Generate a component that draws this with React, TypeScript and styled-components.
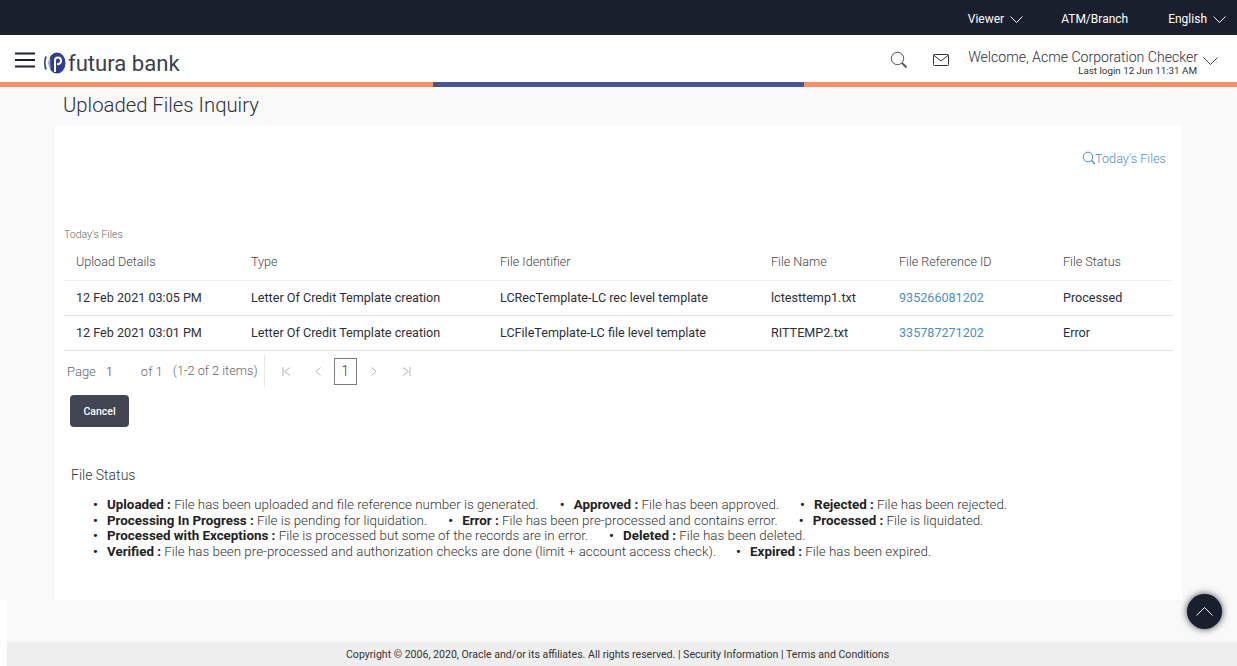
import React from "react";
import styled, { createGlobalStyle } from "styled-components";

const GlobalStyle = createGlobalStyle`
  html, body {
    margin: 0;
    padding: 0;
    background: #fff;
    font-family: Roboto, "Liberation Sans", sans-serif;
    color: #2c2f3a;
  }
  * { box-sizing: border-box; }
`;

const Page = styled.div`
  width: 1237px;
  height: 666px;
  display: flex;
  flex-direction: column;
  position: relative;
  overflow: hidden;
`;

const TopBar = styled.div`
  height: 35px;
  background: #1a1f2d;
  color: #fff;
  display: flex;
  justify-content: flex-end;
  align-items: center;
  padding: 3px 11px 0 0;
  font-size: 12px;
`;

const TopItem = styled.div<{ $gap: number }>`
  display: flex;
  align-items: center;
  gap: 6px;
  margin-left: ${(p) => p.$gap}px;
`;

const Header = styled.header`
  height: 47px;
  background: #fff;
  display: flex;
  align-items: center;
  padding: 0 19px 0 15px;
`;

const MenuIcon = styled.svg`
  margin-top: 2px;
`;

const Brand = styled.div`
  display: flex;
  align-items: center;
  margin-left: 9px;
  margin-top: 9px;
`;

const BrandName = styled.span`
  font-size: 22.1px;
  color: #3a3f4c;
  margin-left: 2px;
`;

const HeaderRight = styled.div`
  margin-left: auto;
  margin-top: 2px;
  display: flex;
  align-items: center;
`;

const MailIcon = styled.svg`
  margin-left: 25px;
`;

const Welcome = styled.div`
  display: flex;
  flex-direction: column;
  align-items: flex-end;
  margin: 7px 5px 0 19px;
`;

const WelcomeName = styled.div`
  font-size: 14.1px;
  font-weight: 300;
  line-height: 15px;
  color: #2c2f3a;
`;

const LastLogin = styled.div`
  font-size: 9.8px;
  line-height: 12px;
  margin-right: 1px;
  color: #333;
`;

const UserCaret = styled.span`
  display: flex;
  margin-top: 2px;
`;

const Stripe = styled.div`
  height: 5px;
  display: grid;
  grid-template-columns: 433px 371px 1fr;
  background: #f78f68;
`;

const StripeMid = styled.div`
  grid-column: 2;
  background: #4a5590;
`;

const Main = styled.main`
  height: 513px;
  padding: 0 55px;
  background: #f9f9f9;
  display: flex;
  flex-direction: column;
`;

const Title = styled.h1`
  margin: 7px 0 0 8px;
  height: 31px;
  font-size: 20.3px;
  line-height: 23px;
  font-weight: 300;
  color: #2c2f3a;
`;

const Card = styled.section`
  background: #fff;
  height: 475px;
  padding: 0 9px;
  display: flex;
  flex-direction: column;
`;

const LinkRow = styled.div`
  display: flex;
  justify-content: flex-end;
  align-items: flex-start;
  padding-top: 26px;
  height: 103px;
  margin-right: 7px;
  color: #4a8fc7;
  font-size: 12.7px;
  font-weight: 300;
`;

const LinkIcon = styled.svg`
  margin-right: -1px;
`;

const Caption = styled.div`
  font-size: 10.5px;
  font-weight: 300;
  color: #666;
  line-height: 13px;
  height: 13px;
`;

const Table = styled.div`
  display: flex;
  flex-direction: column;
  width: 1109px;
`;

const Row = styled.div<{ $head?: boolean }>`
  display: grid;
  grid-template-columns: 175px 249px 271px 128px 164px 1fr;
  padding: ${(p) => (p.$head ? "2px 0 0 12px" : "0 0 2px 12px")};
  height: ${(p) => (p.$head ? 40 : 35)}px;
  align-items: center;
  font-size: ${(p) => (p.$head ? 12.6 : 12.6)}px;
  font-weight: ${(p) => (p.$head ? 300 : 400)};
  color: ${(p) => (p.$head ? "#444" : "#2c2f3a")};
  border-bottom: 1px solid ${(p) => (p.$head ? "#efefef" : "#e2e2e2")};
`;

const RefLink = styled.span`
  color: #4a8fc7;
`;

const Pager = styled.div`
  display: flex;
  align-items: center;
  height: 40px;
  padding-left: 3px;
  font-size: 13px;
  font-weight: 300;
  color: #666;
`;

const PageNumber = styled.span<{ $width: number }>`
  width: ${(p) => p.$width}px;
  color: #444;
  padding-left: 10px;
`;

const PagerInfo = styled.span`
  margin-left: 10px;
  padding-right: 6px;
  height: 32px;
  line-height: 32px;
  font-size: 12.7px;
  border-right: 1px solid #e6e6e6;
`;

const PagerArrow = styled.span<{ $left: number }>`
  display: flex;
  margin-left: ${(p) => p.$left}px;
  color: #b5b5b5;
`;

const PageBox = styled.span`
  width: 23px;
  height: 27px;
  margin-left: 13px;
  border: 1px solid #7a7a7a;
  display: flex;
  align-items: center;
  justify-content: center;
  font-size: 14px;
  color: #444;
`;

const CancelButton = styled.button`
  width: 59px;
  height: 32px;
  margin: 4px 0 0 6px;
  background: #424652;
  color: #fff;
  border: none;
  border-radius: 4px;
  font-family: inherit;
  font-size: 10.5px;
  font-weight: 500;
`;

const StatusTitle = styled.div`
  margin: 40px 0 0 7px;
  font-size: 14px;
  font-weight: 300;
  line-height: 16px;
  color: #333;
`;

const StatusBox = styled.div`
  margin: 14px 0 0 29px;
  font-size: 13.37px;
  font-weight: 300;
  line-height: 15.67px;
  color: #333;
`;

const StatusLine = styled.div`
  display: flex;
  white-space: nowrap;
`;

const StatusItem = styled.span<{ $left: number }>`
  margin-left: ${(p) => p.$left}px;
  &::before {
    content: "•";
    display: inline-block;
    width: 14px;
    font-weight: 700;
    color: #222;
  }
  b {
    font-weight: 700;
    color: #222;
  }
`;

const BottomArea = styled.div`
  flex: 1;
  margin-left: 7px;
  background: #f9f9f9;
  display: flex;
  flex-direction: column;
  justify-content: flex-end;
`;

const Footer = styled.footer`
  height: 24px;
  background: #eeeeee;
  display: flex;
  align-items: center;
  padding-left: 339px;
  font-size: 10.57px;
  color: #333;
`;

const ScrollTop = styled.button`
  position: absolute;
  left: 1187px;
  top: 594px;
  width: 35px;
  height: 35px;
  border-radius: 50%;
  border: none;
  padding: 0;
  background: #1a1f2d;
  box-shadow: 0 0 7px rgba(26, 31, 45, 0.85);
  display: flex;
  align-items: center;
  justify-content: center;
`;

const Chevron = ({ w = 13, h = 7, color = "#fff" }: { w?: number; h?: number; color?: string }) => (
  <svg width={w} height={h} viewBox={`0 0 ${w} ${h}`} fill="none">
    <path d={`M0.5 0.5L${w / 2} ${h - 0.5}L${w - 0.5} 0.5`} stroke={color} strokeWidth="1" />
  </svg>
);

const files = [
  ["12 Feb 2021 03:05 PM", "Letter Of Credit Template creation", "LCRecTemplate-LC rec level template", "lctesttemp1.txt", "935266081202", "Processed"],
  ["12 Feb 2021 03:01 PM", "Letter Of Credit Template creation", "LCFileTemplate-LC file level template", "RITTEMP2.txt", "335787271202", "Error"],
];

const statuses = [
  [
    [0, "Uploaded :", "File has been uploaded and file reference number is generated."],
    [21, "Approved :", "File has been approved."],
    [21, "Rejected :", "File has been rejected."],
  ],
  [
    [0, "Processing In Progress :", "File is pending for liquidation."],
    [21, "Error :", "File has been pre-processed and contains error."],
    [21, "Processed :", "File is liquidated."],
  ],
  [
    [0, "Processed with Exceptions :", "File is processed but some of the records are in error."],
    [21, "Deleted :", "File has been deleted."],
  ],
  [
    [0, "Verified :", "File has been pre-processed and authorization checks are done (limit + account access check)."],
    [20, "Expired :", "File has been expired."],
  ],
] as [number, string, string][][];

export default function App() {
  return (
    <Page>
      <GlobalStyle />
      <TopBar>
        <TopItem $gap={0}>Viewer <Chevron /></TopItem>
        <TopItem $gap={38}>ATM/Branch</TopItem>
        <TopItem $gap={40}>English <Chevron /></TopItem>
      </TopBar>
      <Header>
        <MenuIcon width="20" height="16" viewBox="0 0 20 16">
          <path d="M0 1.5H20M0 8H20M0 14.5H20" stroke="#1f2330" strokeWidth="2" />
        </MenuIcon>
        <Brand>
          <svg width="22" height="22" viewBox="0 0 22 22" fill="none">
            <path d="M2 4.5C0.6 8 0.6 14 2 17.5" stroke="#2f3c8f" strokeWidth="1.8" />
            <ellipse cx="13" cy="11" rx="8.5" ry="10.5" fill="#2f3c8f" />
            <path d="M5.6 6L6 17" stroke="#fff" strokeWidth="0.8" />
            <path d="M11 20V8.5C11 6.5 12.5 5.5 14 5.5C16 5.5 17 7 17 8.8C17 11 15.5 12.2 13 12.2" stroke="#fff" strokeWidth="2" />
          </svg>
          <BrandName>futura bank</BrandName>
        </Brand>
        <HeaderRight>
          <svg width="18" height="18" viewBox="0 0 18 18" fill="none">
            <circle cx="7.5" cy="7.5" r="6.2" stroke="#555" strokeWidth="1" />
            <path d="M12 12L16.5 16.5" stroke="#555" strokeWidth="1.8" />
          </svg>
          <MailIcon width="16" height="12" viewBox="0 0 16 12" fill="none">
            <rect x="0.5" y="0.5" width="15" height="11" rx="1" stroke="#333" />
            <path d="M0.5 1L8 7L15.5 1" stroke="#333" />
          </MailIcon>
          <Welcome>
            <WelcomeName>Welcome, Acme Corporation Checker</WelcomeName>
            <LastLogin>Last login 12 Jun 11:31 AM</LastLogin>
          </Welcome>
          <UserCaret>
            <Chevron w={15} h={8} color="#444" />
          </UserCaret>
        </HeaderRight>
      </Header>
      <Stripe><StripeMid /></Stripe>
      <Main>
        <Title>Uploaded Files Inquiry</Title>
        <Card>
          <LinkRow>
            <LinkIcon width="14" height="14" viewBox="0 0 14 14" fill="none">
              <circle cx="6" cy="6" r="4.8" stroke="#4a8fc7" />
              <path d="M9.5 9.5L13 13" stroke="#4a8fc7" strokeWidth="1.5" />
            </LinkIcon>
            <span>Today's Files</span>
          </LinkRow>
          <Caption>Today's Files</Caption>
          <Table>
            <Row $head>
              <span>Upload Details</span>
              <span>Type</span>
              <span>File Identifier</span>
              <span>File Name</span>
              <span>File Reference ID</span>
              <span>File Status</span>
            </Row>
            {files.map((f) => (
              <Row key={f[4]}>
                <span>{f[0]}</span>
                <span>{f[1]}</span>
                <span>{f[2]}</span>
                <span>{f[3]}</span>
                <RefLink>{f[4]}</RefLink>
                <span>{f[5]}</span>
              </Row>
            ))}
          </Table>
          <Pager>
            Page
            <PageNumber $width={45}>1</PageNumber>
            of 1
            <PagerInfo>(1-2 of 2 items)</PagerInfo>
            <PagerArrow $left={17}>
              <svg width="9" height="9" viewBox="0 0 9 9" fill="none"><path d="M1 0V9M8 0.5L2.5 4.5L8 8.5" stroke="currentColor" /></svg>
            </PagerArrow>
            <PagerArrow $left={24}>
              <svg width="6" height="9" viewBox="0 0 6 9" fill="none"><path d="M5.5 0.5L1 4.5L5.5 8.5" stroke="currentColor" /></svg>
            </PagerArrow>
            <PageBox>1</PageBox>
            <PagerArrow $left={14}>
              <svg width="6" height="9" viewBox="0 0 6 9" fill="none"><path d="M0.5 0.5L5 4.5L0.5 8.5" stroke="currentColor" /></svg>
            </PagerArrow>
            <PagerArrow $left={25}>
              <svg width="9" height="9" viewBox="0 0 9 9" fill="none"><path d="M8 0V9M1 0.5L6.5 4.5L1 8.5" stroke="currentColor" /></svg>
            </PagerArrow>
          </Pager>
          <CancelButton>Cancel</CancelButton>
          <StatusTitle>File Status</StatusTitle>
          <StatusBox>
            {statuses.map((line, i) => (
              <StatusLine key={i}>
                {line.map(([left, name, text]) => (
                  <StatusItem key={name} $left={left}>
                    <b>{name}</b> {text}
                  </StatusItem>
                ))}
              </StatusLine>
            ))}
          </StatusBox>
        </Card>
      </Main>
      <BottomArea>
        <Footer>Copyright © 2006, 2020, Oracle and/or its affiliates. All rights reserved. | Security Information | Terms and Conditions</Footer>
      </BottomArea>
      <ScrollTop>
        <svg width="17" height="9" viewBox="0 0 17 9" fill="none">
          <path d="M0.5 8.5L8.5 0.5L16.5 8.5" stroke="#fff" strokeWidth="1" />
        </svg>
      </ScrollTop>
    </Page>
  );
}
